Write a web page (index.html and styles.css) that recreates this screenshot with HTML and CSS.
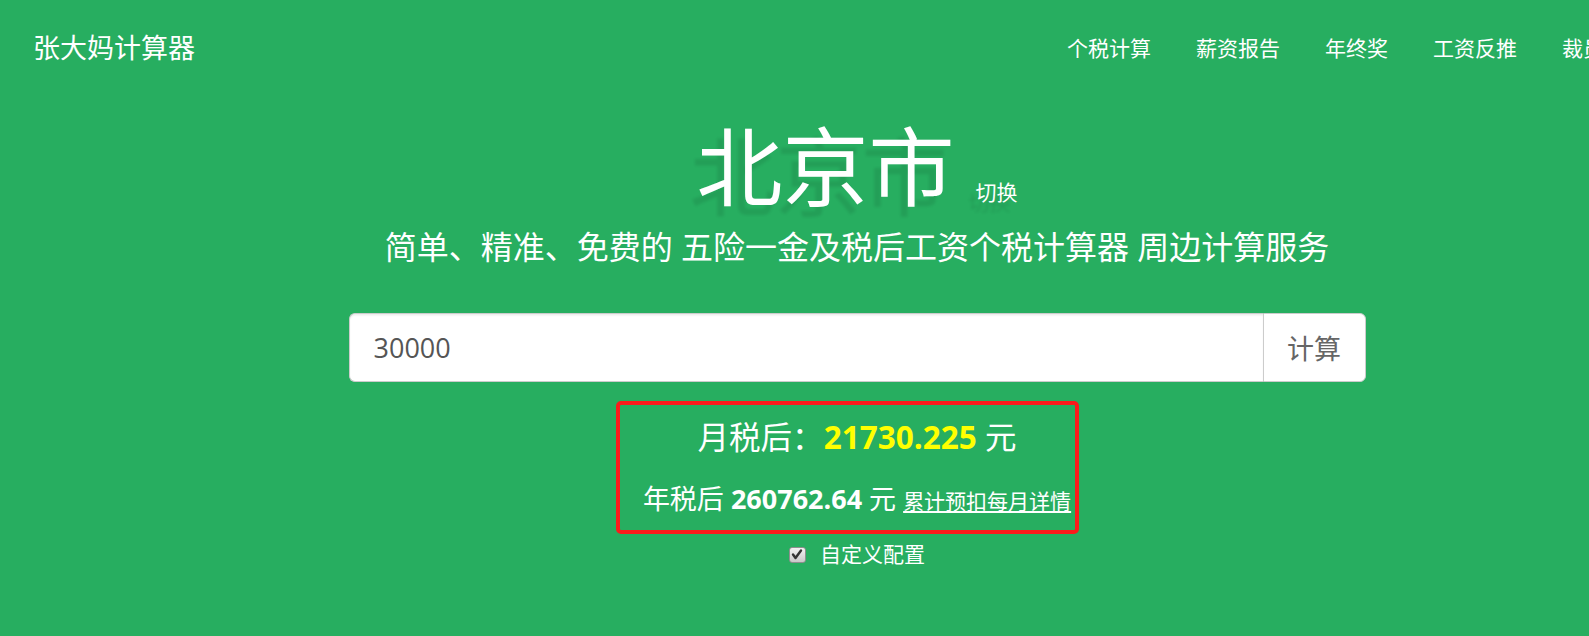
FILE: index.html
```html
<!DOCTYPE html>
<html lang="zh-CN">
<head>
<meta charset="utf-8">
<title>张大妈计算器</title>
<link rel="stylesheet" href="styles.css">
</head>
<body>
<div class="page">
  <header class="navbar">
    <a class="brand" href="#">张大妈计算器</a>
    <nav class="nav">
      <a href="#">个税计算</a>
      <a href="#">薪资报告</a>
      <a href="#">年终奖</a>
      <a href="#">工资反推</a>
      <a href="#">裁员补偿</a>
    </nav>
  </header>

  <main class="hero">
    <h1 class="city">北京市<small class="switch">切换</small></h1>
    <p class="lead">简单、精准、免费的 五险一金及税后工资个税计算器 周边计算服务</p>

    <div class="input-group">
      <input class="salary" type="text" value="30000">
      <button class="calc" type="button">计算</button>
    </div>

    <div class="result">
      <p class="monthly">月税后：<strong class="yellow">21730.225</strong> 元</p>
      <p class="yearly">年税后 <strong>260762.64</strong> 元 <a class="detail" href="#">累计预扣每月详情</a></p>
    </div>

    <label class="custom">
      <span class="check"><svg viewBox="0 0 16 15" width="16" height="15"><path d="M4 7.5 L6.5 11 L12 3.5" fill="none" stroke="#333" stroke-width="2.4" stroke-linecap="round" stroke-linejoin="round"/></svg></span>
      <span>自定义配置</span>
    </label>
  </main>
</div>
</body>
</html>
```

FILE: styles.css
```css
html, body {
  margin: 0;
  padding: 0;
  overflow: hidden;
  background: #27ae60;
}

body {
  font-family: "Open Sans", "Noto Sans CJK SC", sans-serif;
  color: #fff;
}

.page {
  width: 1714px;
  height: 636px;
  background: #27ae60;
}

.navbar {
  height: 96px;
  display: flex;
  align-items: center;
  padding: 0 45.5px 0 33px;
}

.brand {
  font-size: 27px;
  line-height: 30px;
  color: #fff;
  text-decoration: none;
}

.nav {
  margin-left: auto;
  display: flex;
}

.nav a {
  font-size: 21px;
  line-height: 30px;
  padding: 0 22.5px;
  color: #fff;
  text-decoration: none;
  white-space: nowrap;
}

.hero {
  text-align: center;
}

.city {
  margin: 23.5px 0 0;
  font-size: 86px;
  font-weight: 400;
  line-height: 1.1;
  text-shadow: -7px 10px 3px rgba(0, 0, 0, 0.09);
}

.switch {
  font-size: 21px;
  margin-left: 21px;
}

.lead {
  margin: 11px 0 0;
  font-size: 32px;
  line-height: 1.4;
}

.input-group {
  width: 1017px;
  height: 69px;
  margin: 43.5px auto 0;
  display: flex;
}

.salary {
  flex: 1;
  min-width: 0;
  box-sizing: border-box;
  height: 69px;
  margin: 0;
  padding: 0 24px;
  border: 1.5px solid #ccc;
  border-right: none;
  border-radius: 6px 0 0 6px;
  background: #fff;
  box-shadow: inset 0 1.5px 1.5px rgba(0, 0, 0, 0.075);
  font-family: "Open Sans", "Noto Sans CJK SC", sans-serif;
  font-size: 27px;
  color: #555;
  outline: none;
}

.calc {
  box-sizing: border-box;
  width: 103px;
  height: 69px;
  margin: 0;
  padding: 0;
  border: 1.5px solid #ccc;
  border-radius: 0 6px 6px 0;
  background: #fff;
  font-family: "Open Sans", "Noto Sans CJK SC", sans-serif;
  font-size: 27px;
  color: #666;
}

.result {
  box-sizing: border-box;
  width: 463px;
  margin: 19px 0 0 calc(50% - 241px);
  padding: 10px 0 12px 19px;
  border: 4px solid #fb1b1b;
  border-radius: 5px;
}

.result p {
  margin: 0;
  line-height: 1.4;
}

.monthly {
  font-size: 31.5px;
}

.yearly {
  margin-top: 21px !important;
  font-size: 27px;
}

.result strong {
  font-weight: 700;
}

.yellow {
  color: #ffff00;
}

.detail {
  font-size: 21px;
  color: #fff;
  text-decoration: underline;
}

.custom {
  margin-top: 6px;
  display: inline-flex;
  align-items: center;
  gap: 14px;
  font-size: 21px;
  line-height: 1.4;
}

.check {
  width: 17px;
  height: 16px;
  box-sizing: border-box;
  border: 1px solid #8f8f8f;
  border-radius: 3px;
  background: linear-gradient(#f2f2f2, #c9c9c9);
  display: flex;
}

.check svg {
  display: block;
  margin: -1px;
}
```
